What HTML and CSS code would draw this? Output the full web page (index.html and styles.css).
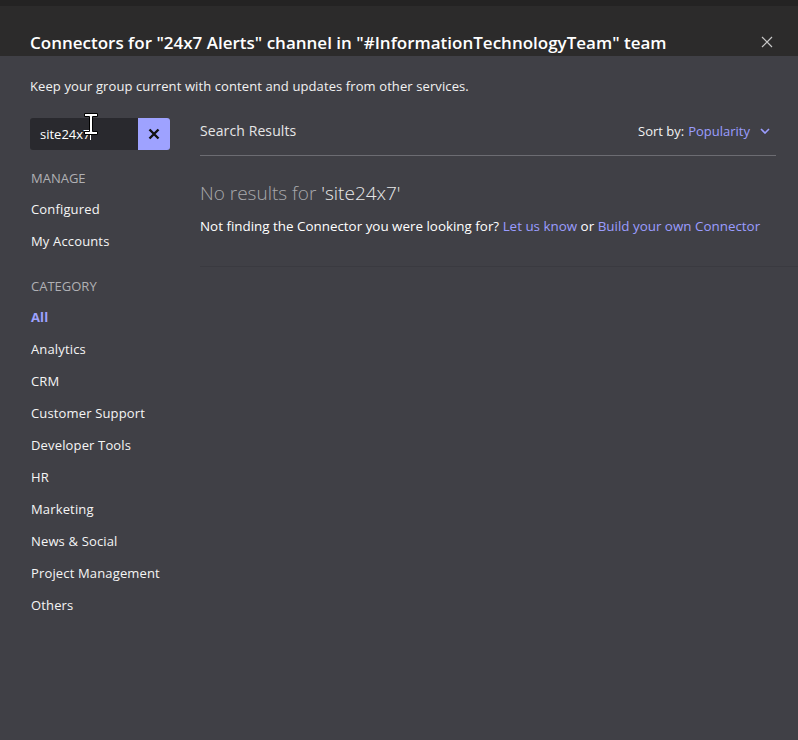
FILE: index.html
```html
<!DOCTYPE html>
<html>
<head>
<meta charset="utf-8">
<link rel="stylesheet" href="styles.css">
</head>
<body>
<div class="dialog">
  <header class="head">
    <h1 class="title">Connectors for "24x7 Alerts" channel in "#InformationTechnologyTeam" team</h1>
    <svg class="close" width="12" height="12" viewBox="0 0 12 12"><path d="M1 1L11 11M11 1L1 11" stroke="#c8c8c8" stroke-width="1.2" fill="none"/></svg>
  </header>
  <div class="content">
    <p class="sub">Keep your group current with content and updates from other services.</p>
    <div class="cols">
      <nav class="side">
        <div class="search">
          <span class="field">site24x7</span>
          <span class="clear"><svg width="12" height="12" viewBox="0 0 12 12"><path d="M1.5 1.5L10.5 10.5M10.5 1.5L1.5 10.5" stroke="#111" stroke-width="2.4" fill="none"/></svg></span>
          <svg class="ibeam" width="16" height="28" viewBox="0 0 16 28"><path d="M1.5 1.5H14.5V4.5H9.5V19.5H14.5V22.5H1.5V19.5H6.5V4.5H1.5Z" fill="#fff" stroke="#000" stroke-width="1"/><path d="M7.5 23V28" stroke="#fff" stroke-width="1"/></svg>
        </div>
        <div class="label first">MANAGE</div>
        <div class="item">Configured</div>
        <div class="item">My Accounts</div>
        <div class="label gap">CATEGORY</div>
        <div class="item active">All</div>
        <div class="item">Analytics</div>
        <div class="item">CRM</div>
        <div class="item">Customer Support</div>
        <div class="item">Developer Tools</div>
        <div class="item">HR</div>
        <div class="item">Marketing</div>
        <div class="item">News &amp; Social</div>
        <div class="item">Project Management</div>
        <div class="item">Others</div>
      </nav>
      <main class="main">
        <div class="bar">
          <span class="results">Search Results</span>
          <span class="sort">Sort by: <span class="link">Popularity</span>
            <svg class="chev" width="10" height="6" viewBox="0 0 10 6"><path d="M1 1L5 5L9 1" stroke="#9b9dff" stroke-width="1.6" fill="none"/></svg>
          </span>
        </div>
        <div class="empty">
          <div class="nores">No results for <span class="q">'site24x7'</span></div>
          <div class="hint">Not finding the Connector you were looking for? <span class="link">Let us know</span> or <span class="link">Build your own Connector</span></div>
        </div>
      </main>
    </div>
  </div>
</div>
</body>
</html>
```
FILE: styles.css
```css
* { box-sizing: border-box; }
html, body { margin: 0; padding: 0; }
body {
  background: #404046;
  font-family: "Open Sans", "Noto Sans", sans-serif;
  color: #ffffff;
  width: 798px;
  height: 740px;
  overflow: hidden;
}
.dialog { height: 740px; }
.head {
  height: 56px;
  background: #2c2b2b;
  border-top: 6px solid #242323;
  display: flex;
  align-items: flex-start;
  padding: 25px 25px 0 30px;
  justify-content: space-between;
}
.title {
  margin: 0;
  font-size: 17px;
  line-height: 23px;
  font-weight: 600;
  color: #ffffff;
}
.close { margin-top: 5px; }
.content { padding: 0 22px 0 30px; }
.sub {
  margin: 0;
  padding-top: 21px;
  height: 62px;
  font-size: 13px;
  letter-spacing: 0.1px;
  color: #f2f2f2;
}
.cols { display: flex; }
.side { width: 140px; flex: none; }
.search { position: relative; display: flex; height: 32px; }
.field {
  width: 108px;
  background: #29292e;
  border-radius: 3px 0 0 3px;
  font-size: 13px;
  line-height: 32px;
  padding-left: 10px;
  color: #fff;
  overflow: hidden;
  white-space: nowrap;
}
.clear {
  width: 32px;
  background: #9ea2ff;
  border-radius: 0 3px 3px 0;
  display: flex;
  align-items: center;
  justify-content: center;
}
.ibeam { position: absolute; left: 53px; top: -6px; }
.label {
  font-size: 13px;
  color: #b0b0b4;
  line-height: 30px;
  padding-left: 1px;
}
.label.first { margin-top: 13px; }
.label.gap { margin-top: 14px; }
.item {
  font-size: 13px;
  line-height: 32px;
  color: #f5f5f5;
  padding-left: 1px;
  letter-spacing: 0.15px;
  white-space: nowrap;
}
.item.active { color: #9ea2ff; font-weight: 700; }
.main { flex: 1; margin-left: 30px; }
.bar {
  display: flex;
  justify-content: space-between;
  align-items: center;
  height: 38px;
  padding-bottom: 12px;
  border-bottom: 1px solid #6c6c72;
}
.results { font-size: 14px; letter-spacing: 0.1px; color: #e6e6e6; }
.sort { font-size: 13px; color: #f2f2f2; padding-right: 6px; display: flex; align-items: center; }
.link { color: #9b9dff; }
.sort .link { margin-left: 4px; }
.chev { margin-left: 10px; }
.empty {
  padding-top: 23px;
  height: 111px;
  border-bottom: 1px solid #3a3a40;
  margin-right: -22px;
}
.nores {
  font-size: 19px;
  font-weight: 300;
  color: #a8a8ac;
  line-height: 28px;
}
.nores .q { color: #e8e8e8; }
.hint {
  margin-top: 10px;
  font-size: 13.4px;
  color: #ffffff;
}
```
